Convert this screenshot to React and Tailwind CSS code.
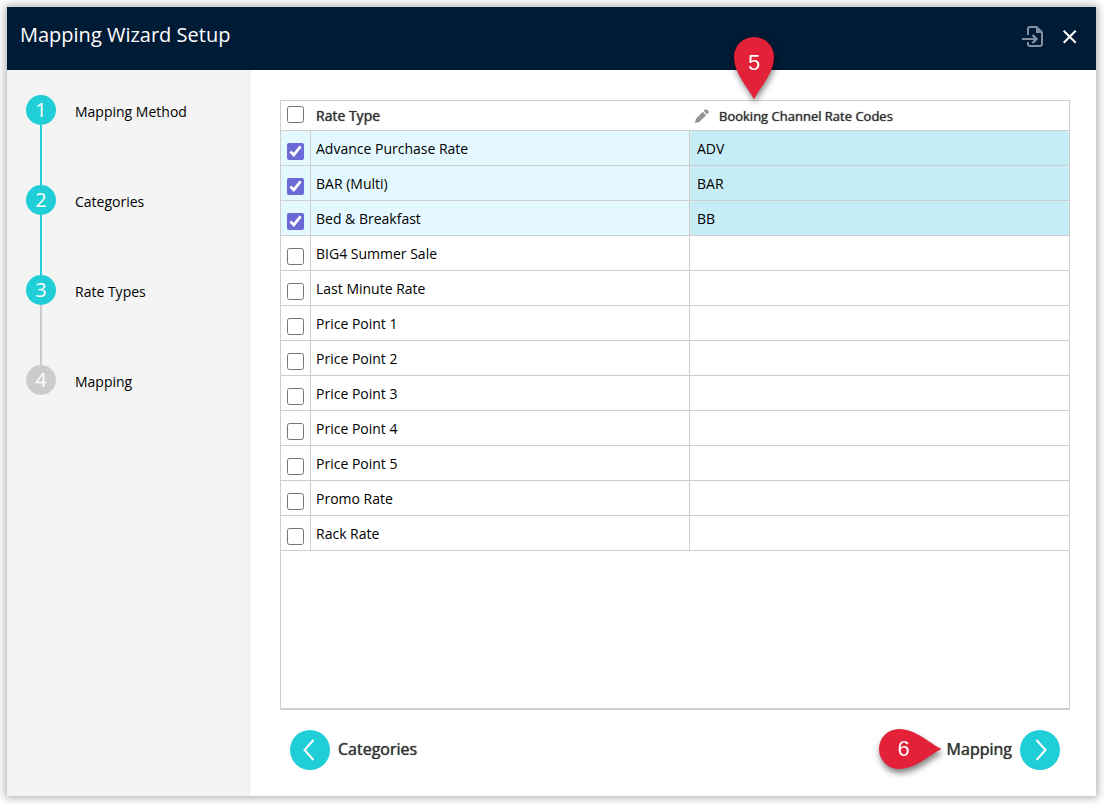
import { useState } from "react";

const STEPS = [
  { id: 1, name: "Mapping Method", done: true },
  { id: 2, name: "Categories", done: true },
  { id: 3, name: "Rate Types", done: true },
  { id: 4, name: "Mapping", done: false },
];

const RATE_TYPES = [
  { name: "Advance Purchase Rate", code: "ADV", selected: true },
  { name: "BAR (Multi)", code: "BAR", selected: true },
  { name: "Bed & Breakfast", code: "BB", selected: true },
  { name: "BIG4 Summer Sale", code: "", selected: false },
  { name: "Last Minute Rate", code: "", selected: false },
  { name: "Price Point 1", code: "", selected: false },
  { name: "Price Point 2", code: "", selected: false },
  { name: "Price Point 3", code: "", selected: false },
  { name: "Price Point 4", code: "", selected: false },
  { name: "Price Point 5", code: "", selected: false },
  { name: "Promo Rate", code: "", selected: false },
  { name: "Rack Rate", code: "", selected: false },
];

function ImportIcon() {
  return (
    <svg width="21" height="21" viewBox="0 0 21 21" fill="none" aria-hidden="true">
      <path d="M6 9V3Q6 1 8 1H14.500L20 6.500V18Q20 20 18 20H8Q6 20 6 18V16" stroke="#8390a0" strokeWidth="2" />
      <path d="M14 1H15.500L20 5.500V7H14Z" fill="#8390a0" />
      <path d="M0 13H14" stroke="#8390a0" strokeWidth="2" />
      <path d="M10.500 9L14.500 13L10.500 17" stroke="#8390a0" strokeWidth="2.400" />
    </svg>
  );
}

function PencilIcon() {
  return (
    <svg width="14" height="14" viewBox="0 0 14 14" fill="#949494" aria-hidden="true">
      <path d="M0 14L.9 9.700L7.800 2.800L11.200 6.200L4.300 13.100Z" />
      <path d="M8.700 1.900L10 .6Q11 -.3 12 .6L13.400 2Q14.300 3 13.400 4L12.100 5.300Z" />
    </svg>
  );
}

function Chevron({ d }) {
  return (
    <span className="flex size-10 items-center justify-center rounded-full bg-[#20ced8]">
      <svg width="14" height="22" viewBox="0 0 14 22" fill="none" stroke="white" strokeWidth="2" aria-hidden="true">
        <path d={d} />
      </svg>
    </span>
  );
}

function Sidebar() {
  return (
    <nav className="w-[243px] shrink-0 border-r border-[#ebebeb] bg-[#f4f4f4] pt-[25px] pl-[19px]">
      <ol>
        {STEPS.map((step, index) => (
          <li key={step.id} className="flex gap-[19px]">
            <div className="flex flex-col items-center">
              <span
                className={`flex size-[30px] items-center justify-center rounded-full text-xl text-white ${
                  step.done ? "bg-[#20ced8]" : "bg-[#cbcbcb]"
                }`}
              >
                {step.id}
              </span>
              {index < STEPS.length - 1 && (
                <span className={`h-[60px] w-0.5 ${STEPS[index + 1].done ? "bg-[#20ced8]" : "bg-[#cbcbcb]"}`} />
              )}
            </div>
            <a href="#" className="h-[30px] pt-[7px] text-sm leading-5 text-black">
              {step.name}
            </a>
          </li>
        ))}
      </ol>
    </nav>
  );
}

function RateTable() {
  const [rates, setRates] = useState(RATE_TYPES);
  const allSelected = rates.every((rate) => rate.selected);

  const toggle = (name) =>
    setRates(rates.map((rate) => (rate.name === name ? { ...rate, selected: !rate.selected } : rate)));
  const toggleAll = () => setRates(rates.map((rate) => ({ ...rate, selected: !allSelected })));

  return (
    <div className="flex-1 border border-b-2 border-[#cecece]">
      <table className="w-full table-fixed border-separate border-spacing-0 text-left text-sm leading-5">
        <colgroup>
          <col className="w-[30px]" />
          <col />
          <col />
        </colgroup>
        <thead className="text-[#333]">
          <tr>
            <th className="h-[30px] border-b border-[#cecece] p-0 pt-[5px] pl-1.5 align-top">
              <input
                type="checkbox"
                aria-label="Select all rate types"
                checked={allSelected}
                onChange={toggleAll}
                className="block size-[17px] accent-[#6b69d6]"
              />
            </th>
            <th className="border-b border-[#cecece] p-0 pl-[5px] font-normal [text-shadow:0_0_1px_#333]">Rate Type</th>
            <th className="relative border-b border-[#cecece] p-0 pl-[5px] font-normal">
              <span className="flex items-center gap-[10px] text-[13px] [text-shadow:0_0_1px_#333]">
                <PencilIcon />
                Booking Channel Rate Codes
              </span>
              <span className="absolute bottom-full left-11 drop-shadow-[1px_3px_3px_rgba(0,0,0,0.5)]">
                <svg width="40" height="64" viewBox="0 0 40 64" aria-hidden="true">
                  <path d="M20 62.500C16 53 0 37 0 20A20 20 0 0 1 40 20C40 37 24 53 20 62.500Z" fill="#e32138" />
                </svg>
                <span className="absolute inset-x-0 top-3 text-center font-['Liberation_Sans',sans-serif] text-[22px] leading-7 text-white">
                  5
                </span>
              </span>
            </th>
          </tr>
        </thead>
        <tbody className="text-black">
          {rates.map((rate) => (
            <tr key={rate.name} className={rate.selected ? "bg-[#e4f9ff]" : "bg-white"}>
              <td className="h-[35px] border-r border-b border-[#cecece] p-0 pt-3 pl-1.5 align-top">
                <input
                  type="checkbox"
                  aria-label={rate.name}
                  checked={rate.selected}
                  onChange={() => toggle(rate.name)}
                  className="block size-[17px] accent-[#6b69d6]"
                />
              </td>
              <td className="border-r border-b border-[#cecece] p-0 pt-2 pl-[5px] align-top">{rate.name}</td>
              <td className="border-b border-[#cecece] p-0 align-top">
                <div className={`h-[34px] rounded-t pt-2 pl-[7px] ${rate.selected ? "bg-[#c6ecf5]" : ""}`}>
                  {rate.code}
                </div>
              </td>
            </tr>
          ))}
        </tbody>
      </table>
    </div>
  );
}

export default function App() {
  return (
    <div className="flex min-h-screen bg-white p-2 pt-[7px] pl-[7px] font-['Open_Sans',sans-serif]">
      <div className="flex flex-1 flex-col bg-white shadow-[0_0_8px_2px_rgba(0,0,0,0.3)]">
        <header className="flex h-[63px] items-center justify-between bg-[#001b35] pr-[19px] pl-[13px] text-white">
          <h1 className="pb-2 text-xl leading-7">Mapping Wizard Setup</h1>
          <div className="flex items-center gap-5 pb-1">
            <button type="button" aria-label="Import mapping">
              <ImportIcon />
            </button>
            <button type="button" aria-label="Close">
              <svg width="14" height="14" viewBox="0 0 14 14" stroke="white" strokeWidth="2" aria-hidden="true">
                <path d="M.7 .7L12.700 12.700M12.700 .7L.7 12.700" />
              </svg>
            </button>
          </div>
        </header>

        <div className="flex flex-1">
          <Sidebar />
          <main className="flex flex-1 flex-col px-[30px] pt-[30px] pr-[26px] pb-[26px]">
            <RateTable />
            <div className="mt-5 flex items-center justify-between px-[10px] text-base text-[#333]">
              <button type="button" className="flex items-center gap-2">
                <Chevron d="M10.500 1L1.500 11L10.500 21" />
                <span className="pb-0.5 [text-shadow:0_0_1px_#333]">Categories</span>
              </button>
              <button type="button" className="relative flex items-center gap-2">
                <span className="absolute right-full mr-1 pb-0.5 drop-shadow-[1px_4px_3px_rgba(0,0,0,0.5)]">
                  <svg width="64" height="40" viewBox="0 0 64 40" aria-hidden="true">
                    <path d="M62.500 20C53 16 37 0 20 0A20 20 0 0 0 20 40C37 40 53 24 62.500 20Z" fill="#e32138" />
                  </svg>
                  <span className="absolute top-1.5 left-0 w-[50px] text-center font-['Liberation_Sans',sans-serif] text-[22px] leading-7 text-white">
                    6
                  </span>
                </span>
                <span className="pb-0.5 [text-shadow:0_0_1px_#333]">Mapping</span>
                <Chevron d="M3.500 1L12.500 11L3.500 21" />
              </button>
            </div>
          </main>
        </div>
      </div>
    </div>
  );
}
